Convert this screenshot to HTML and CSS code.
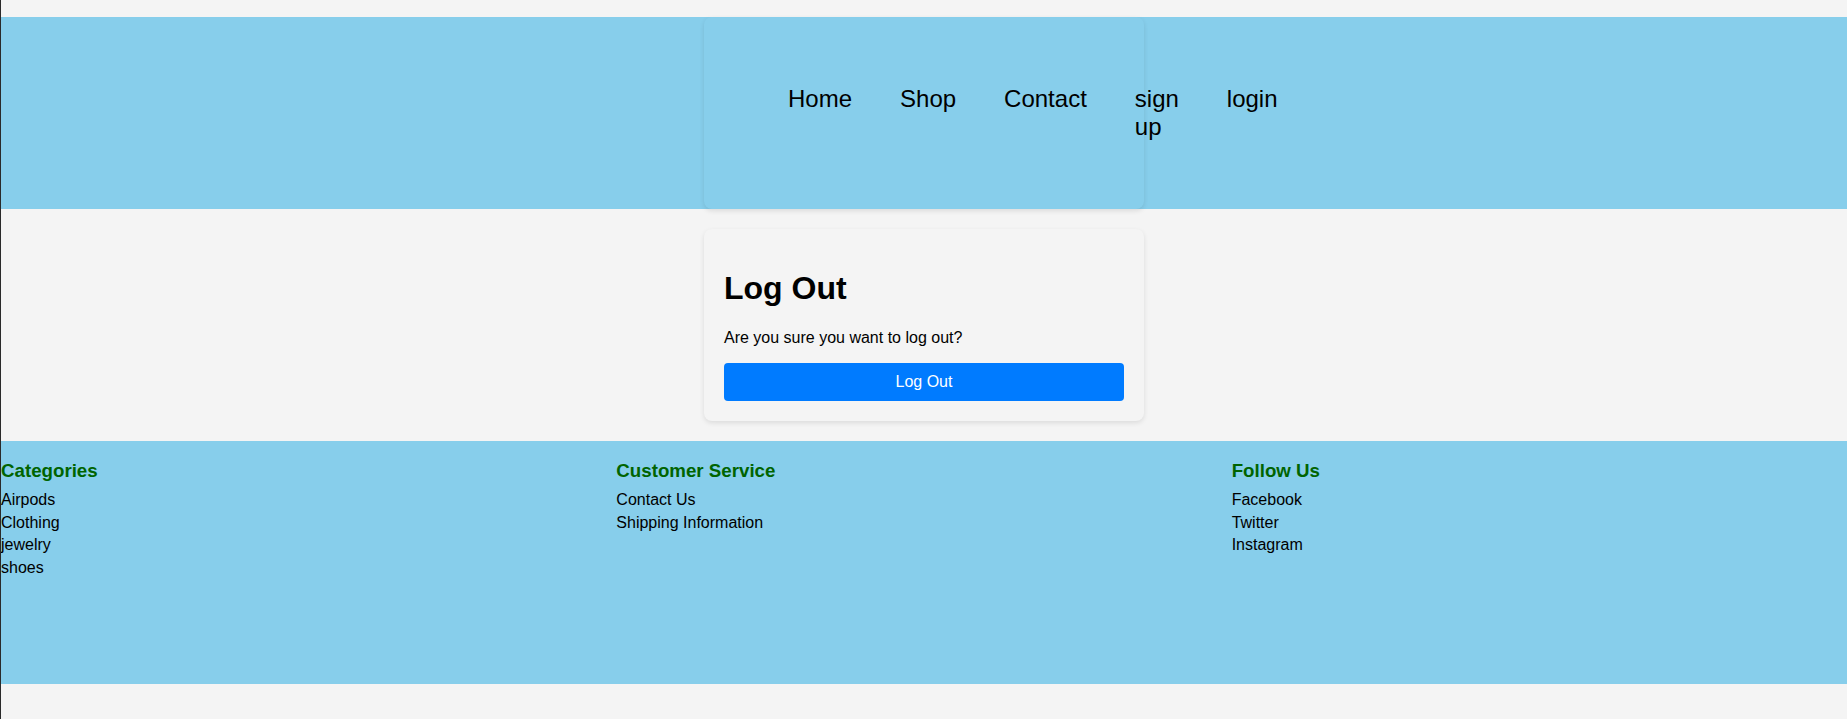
FILE: index.html
```html
<!DOCTYPE html>
<html lang="en">
<head>
<meta charset="utf-8">
<title>Log Out</title>
<link rel="stylesheet" href="styles.css">
</head>
<body>
<header class="site-header">
  <nav class="container nav-box">
    <ul class="nav-list">
      <li class="nav-item"><a href="#">Home</a></li>
      <li class="nav-item"><a href="#">Shop</a></li>
      <li class="nav-item"><a href="#">Contact</a></li>
      <li class="nav-item"><a href="#">sign up</a></li>
      <li class="nav-item"><a href="#">login</a></li>
    </ul>
  </nav>
</header>
<main class="container card">
  <h1 class="card-title">Log Out</h1>
  <p class="card-text">Are you sure you want to log out?</p>
  <button class="logout-btn" type="button">Log Out</button>
</main>
<footer class="site-footer">
  <div class="footer-col">
    <h3 class="footer-heading">Categories</h3>
    <ul class="footer-list">
      <li>Airpods</li>
      <li>Clothing</li>
      <li>jewelry</li>
      <li>shoes</li>
    </ul>
  </div>
  <div class="footer-col">
    <h3 class="footer-heading">Customer Service</h3>
    <ul class="footer-list">
      <li>Contact Us</li>
      <li>Shipping Information</li>
    </ul>
  </div>
  <div class="footer-col">
    <h3 class="footer-heading">Follow Us</h3>
    <ul class="footer-list">
      <li>Facebook</li>
      <li>Twitter</li>
      <li>Instagram</li>
    </ul>
  </div>
</footer>
</body>
</html>
```
FILE: styles.css
```css
html {
  background: #f4f4f4;
}
body {
  margin: 0;
  padding: 17px 0 34px;
  border-left: 1px solid #2a2a2a;
  min-height: 719px;
  box-sizing: border-box;
  background: #f4f4f4;
  font-family: "Liberation Sans", Arial, sans-serif;
  color: #000;
}
.site-header {
  background: #87ceeb;
}
.container {
  width: 400px;
  margin: 0 auto;
  padding: 20px;
  border-radius: 8px;
  box-shadow: 0 2px 5px rgba(0, 0, 0, 0.1);
}
.nav-list {
  display: flex;
  list-style: none;
  margin: 16px 0;
  padding: 0 0 0 40px;
}
.nav-item {
  padding: 32px 24px;
  font-size: 24px;
}
.nav-item a {
  color: #000;
  text-decoration: none;
}
.card {
  margin-top: 20px;
  margin-bottom: 20px;
  background: #f4f4f4;
}
.card-title {
  font-size: 32px;
  margin: 21.44px 0;
}
.card-text {
  font-size: 16px;
  margin: 16px 0;
}
.logout-btn {
  display: block;
  width: 100%;
  padding: 10px;
  border: none;
  border-radius: 4px;
  background: #007bff;
  color: #fff;
  font-family: "Liberation Sans", Arial, sans-serif;
  font-size: 16px;
  line-height: normal;
}
.site-footer {
  display: flex;
  background: #87ceeb;
  padding: 19px 0 0;
  height: 243px;
  box-sizing: border-box;
}
.footer-col {
  flex: 1;
}
.footer-heading {
  color: #006400;
  font-size: 18.72px;
  margin: 0 0 7px;
}
.footer-list {
  list-style: none;
  margin: 0;
  padding: 0;
  font-size: 16px;
  line-height: 22.8px;
}
```
